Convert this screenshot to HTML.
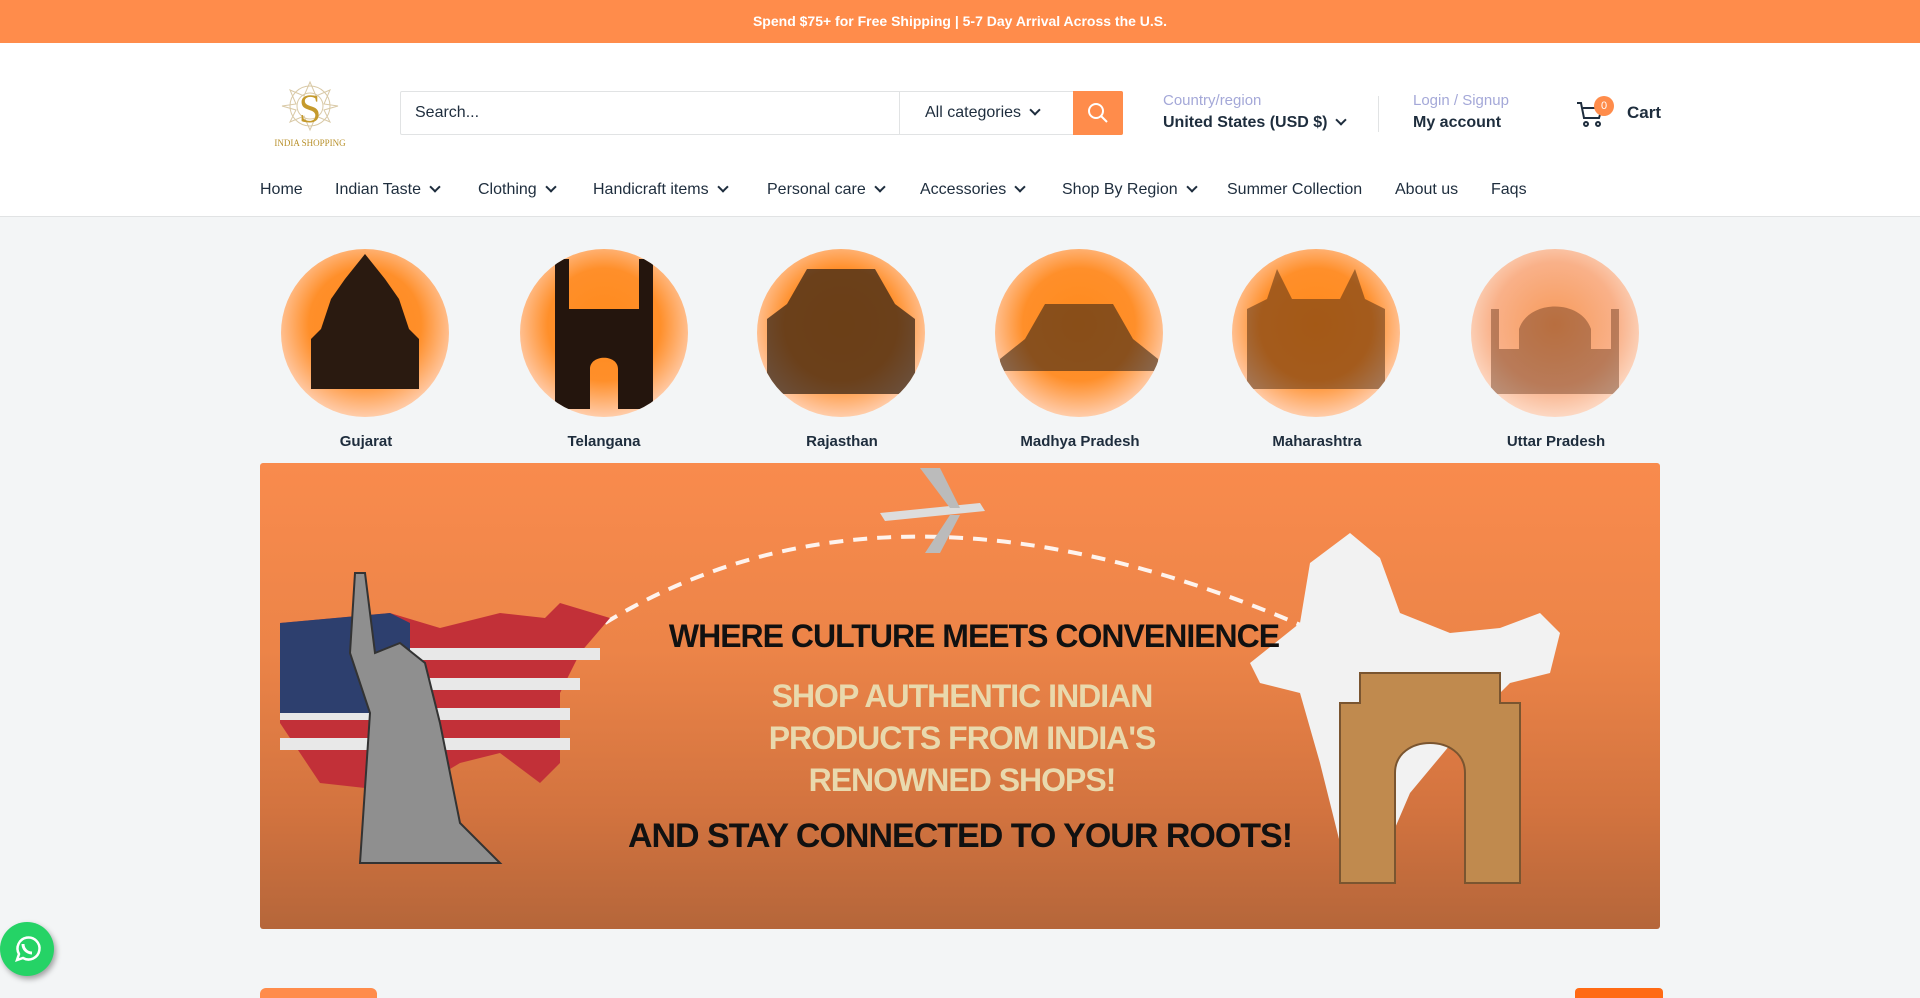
<!DOCTYPE html>
<html><head><meta charset="utf-8"><style>
*{margin:0;padding:0;box-sizing:border-box}
body{width:1920px;height:993px;overflow:hidden;background:#f3f5f6;font-family:"Liberation Sans",sans-serif;color:#1e2d3d;position:relative}
.abs{position:absolute}
.top{left:0;top:0;width:1920px;height:43px;background:#ff8c4b;color:#fff;font-weight:bold;font-size:14px;text-align:center;line-height:43px}
.hdr{left:0;top:43px;width:1920px;height:174px;background:#fff;border-bottom:1px solid #e1e3e4}
.search{left:400px;top:91px;width:723px;height:44px;border:1px solid #e1e3e4;border-radius:2px;background:#fff}
.nav{top:181px;font-size:16px;color:#1e2d3d;white-space:nowrap}
.chev{display:inline-block;width:8px;height:8px;border-right:2px solid #1e2d3d;border-bottom:2px solid #1e2d3d;transform:rotate(45deg);margin-left:10px;position:relative;top:-3px}
.circ{top:249px;width:168px;height:168px;border-radius:50%;overflow:hidden;background:radial-gradient(circle at 50% 45%,#ff8a1c 0,#ff8f2a 45%,#ffc49a 70%,#fff 95%)}
.lbl{top:433px;width:240px;text-align:center;font-size:15px;font-weight:bold;color:#1e2d3d}
.banner{left:260px;top:463px;width:1400px;height:466px;border-radius:3px;overflow:hidden;background:linear-gradient(#f98b4d 0%,#ec8448 40%,#d2733f 75%,#b5663a 100%)}
.bt{position:absolute;left:0;width:100%;text-align:center;font-weight:bold;letter-spacing:-1px}
</style></head><body>
<div class="abs top">Spend $75+ for Free Shipping | 5-7 Day Arrival Across the U.S.</div>
<div class="abs hdr"></div>
<svg class="abs" style="left:268px;top:76px" width="84" height="74" viewBox="0 0 84 74">
<g fill="none" stroke="#d9c9a6" stroke-width="1"><circle cx="42" cy="30" r="20"/><circle cx="42" cy="30" r="13"/><path d="M42 6 L48 20 L62 14 L56 28 L70 30 L56 34 L62 46 L48 40 L42 54 L36 40 L22 46 L28 34 L14 30 L28 28 L22 14 L36 20Z"/></g>
<text x="42" y="46" font-family="Liberation Serif,serif" font-size="40" fill="#c59a2c" text-anchor="middle">S</text>
<text x="42" y="70" font-family="Liberation Serif,serif" font-size="9" fill="#b8902a" text-anchor="middle">INDIA SHOPPING</text></svg>
<div class="abs search"></div>
<div class="abs" style="left:415px;top:104px;font-size:16px;color:#1e2d3d">Search...</div>
<div class="abs" style="left:899px;top:92px;width:1px;height:42px;background:#e1e3e4"></div>
<div class="abs" style="left:925px;top:104px;font-size:16px">All categories<span class="chev"></span></div>
<div class="abs" style="left:1073px;top:91px;width:50px;height:44px;background:#ff8c4b;border-radius:0 2px 2px 0"></div>
<svg class="abs" style="left:1086px;top:101px" width="24" height="24" viewBox="0 0 24 24" fill="none" stroke="#fff" stroke-width="2"><circle cx="10" cy="10" r="7"/><path d="M15 15l6 6"/></svg>
<div class="abs" style="left:1163px;top:92px;font-size:15px;color:#a4a8d8">Country/region</div>
<div class="abs" style="left:1163px;top:114px;font-size:16px;font-weight:bold">United States (USD $)<span class="chev" style="margin-left:10px"></span></div>
<div class="abs" style="left:1378px;top:96px;width:1px;height:36px;background:#e1e3e4"></div>
<div class="abs" style="left:1413px;top:92px;font-size:15px;color:#a4a8d8">Login / Signup</div>
<div class="abs" style="left:1413px;top:114px;font-size:16px;font-weight:bold">My account</div>
<svg class="abs" style="left:1576px;top:100px" width="28" height="28" viewBox="0 0 28 28" fill="none" stroke="#1e2d3d" stroke-width="2"><path d="M1 3h4l3 15h15l3-10H7"/><circle cx="10" cy="24" r="2"/><circle cx="22" cy="24" r="2"/></svg>
<div class="abs" style="left:1594px;top:96px;width:20px;height:20px;border-radius:50%;background:#ff8c4b;color:#fff;font-size:11px;text-align:center;line-height:20px">0</div>
<div class="abs" style="left:1627px;top:103px;font-size:17px;font-weight:bold">Cart</div>
<div class="abs nav" style="left:260px">Home</div>
<div class="abs nav" style="left:335px">Indian Taste<span class="chev"></span></div>
<div class="abs nav" style="left:478px">Clothing<span class="chev"></span></div>
<div class="abs nav" style="left:593px">Handicraft items<span class="chev"></span></div>
<div class="abs nav" style="left:767px">Personal care<span class="chev"></span></div>
<div class="abs nav" style="left:920px">Accessories<span class="chev"></span></div>
<div class="abs nav" style="left:1062px">Shop By Region<span class="chev"></span></div>
<div class="abs nav" style="left:1227px">Summer Collection</div>
<div class="abs nav" style="left:1395px">About us</div>
<div class="abs nav" style="left:1491px">Faqs</div>
<div class="abs circ" style="left:281px"><svg width="168" height="168"><path d="M30 140V90l10-10 10-30 14-20 20-25 20 25 14 20 10 30 10 10v50z" fill="#2a1a10"/></svg></div>
<div class="abs circ" style="left:520px"><svg width="168" height="168"><path d="M35 160V10h14v50h70V10h14v150h-35v-40c0-15-28-15-28 0v40z" fill="#24150d"/></svg></div>
<div class="abs circ" style="left:757px"><svg width="168" height="168"><path d="M10 145V70l20-15 20-35h68l20 35 20 15v75z" fill="#3a2616" opacity=".75"/></svg></div>
<div class="abs circ" style="left:995px"><svg width="168" height="168"><path d="M5 110l25-20 20-35h68l20 35 25 20v12H5z" fill="#3a2616" opacity=".6"/></svg></div>
<div class="abs circ" style="left:1232px"><svg width="168" height="168"><path d="M15 140V60l20-10 10-30 15 30h48l15-30 10 30 20 10v80z" fill="#5a3212" opacity=".55"/></svg></div>
<div class="abs circ" style="left:1471px;background:radial-gradient(circle at 50% 45%,#f79a5a 0,#f9b189 50%,#fde2d2 80%,#fff 98%)"><svg width="168" height="168"><path d="M20 145V60h8v40h20v-20c10-30 62-30 72 0v20h20V60h8v85z" fill="#6b3a20" opacity=".45"/></svg></div>
<div class="abs lbl" style="left:246px">Gujarat</div>
<div class="abs lbl" style="left:484px">Telangana</div>
<div class="abs lbl" style="left:722px">Rajasthan</div>
<div class="abs lbl" style="left:960px">Madhya Pradesh</div>
<div class="abs lbl" style="left:1197px">Maharashtra</div>
<div class="abs lbl" style="left:1436px">Uttar Pradesh</div>
<div class="abs banner">
<svg style="position:absolute;left:0;top:0" width="1400" height="466">
<path d="M345 160 Q 640 -20 1070 175" fill="none" stroke="#fff" stroke-width="4" stroke-dasharray="14 10" opacity=".9"/>
<path d="M620 50 L720 40 L725 48 L625 58z" fill="#ddd"/><path d="M660 5 L690 45 L700 45 L680 5z M665 90 L690 52 L700 52 L680 90z" fill="#bbb"/>
<path d="M20 160 L130 150 L180 165 L240 150 L285 155 L300 140 L350 155 L320 190 L300 230 L300 300 L280 320 L240 290 L200 300 L150 330 L60 320 L20 260z" fill="#c23038"/>
<g fill="#e8e8e8"><rect x="20" y="185" width="320" height="12"/><rect x="20" y="215" width="300" height="12"/><rect x="20" y="245" width="290" height="12"/><rect x="20" y="275" width="290" height="12"/></g>
<path d="M20 160 L130 150 L150 160 L150 250 L20 250z" fill="#2d3f6e"/>
<path d="M100 400 L110 250 L90 190 L95 110 L105 110 L115 190 L140 180 L165 200 L180 260 L200 360 L240 400z" fill="#8f8f8f" stroke="#333" stroke-width="2"/>
<path d="M1050 100 L1090 70 L1120 95 L1140 150 L1190 170 L1240 165 L1280 150 L1300 170 L1290 210 L1250 220 L1200 270 L1150 330 L1120 400 L1100 420 L1080 380 L1060 300 L1040 230 L1000 220 L990 200 L1040 160z" fill="#f2f2f2"/>
<path d="M1080 420 V240 h20 V210 h140 v30 h20 v180 h-55 v-110 c0-40-70-40-70 0 v110z" fill="#c08a4e" stroke="#7a5530" stroke-width="2"/>
</svg>
<div class="bt" style="top:155px;left:14px;font-size:32px;color:#111">WHERE CULTURE MEETS CONVENIENCE</div>
<div class="bt" style="top:212px;left:2px;font-size:32px;color:#e9d9ad;line-height:42px">SHOP AUTHENTIC INDIAN<br>PRODUCTS FROM INDIA'S<br>RENOWNED SHOPS!</div>
<div class="bt" style="top:354px;left:0;font-size:34px;color:#111">AND STAY CONNECTED TO YOUR ROOTS!</div>
</div>
<div class="abs" style="left:0;top:922px;width:54px;height:54px;border-radius:50%;background:#25d366;box-shadow:2px 3px 6px rgba(0,0,0,.35)"></div>
<svg class="abs" style="left:11px;top:934px" width="32" height="30" viewBox="0 0 32 30" fill="none" stroke="#fff" stroke-width="2.5"><path d="M6 26l2-6a11 11 0 1 1 4 4z"/><path d="M12 10c0 5 4 9 9 9" stroke-width="3"/></svg>
<div class="abs" style="left:260px;top:988px;width:117px;height:10px;background:#ff8c4b;border-radius:6px 6px 0 0"></div>
<div class="abs" style="left:1575px;top:988px;width:88px;height:10px;background:#ff6a14;border-radius:4px 4px 0 0"></div>
</body></html>
